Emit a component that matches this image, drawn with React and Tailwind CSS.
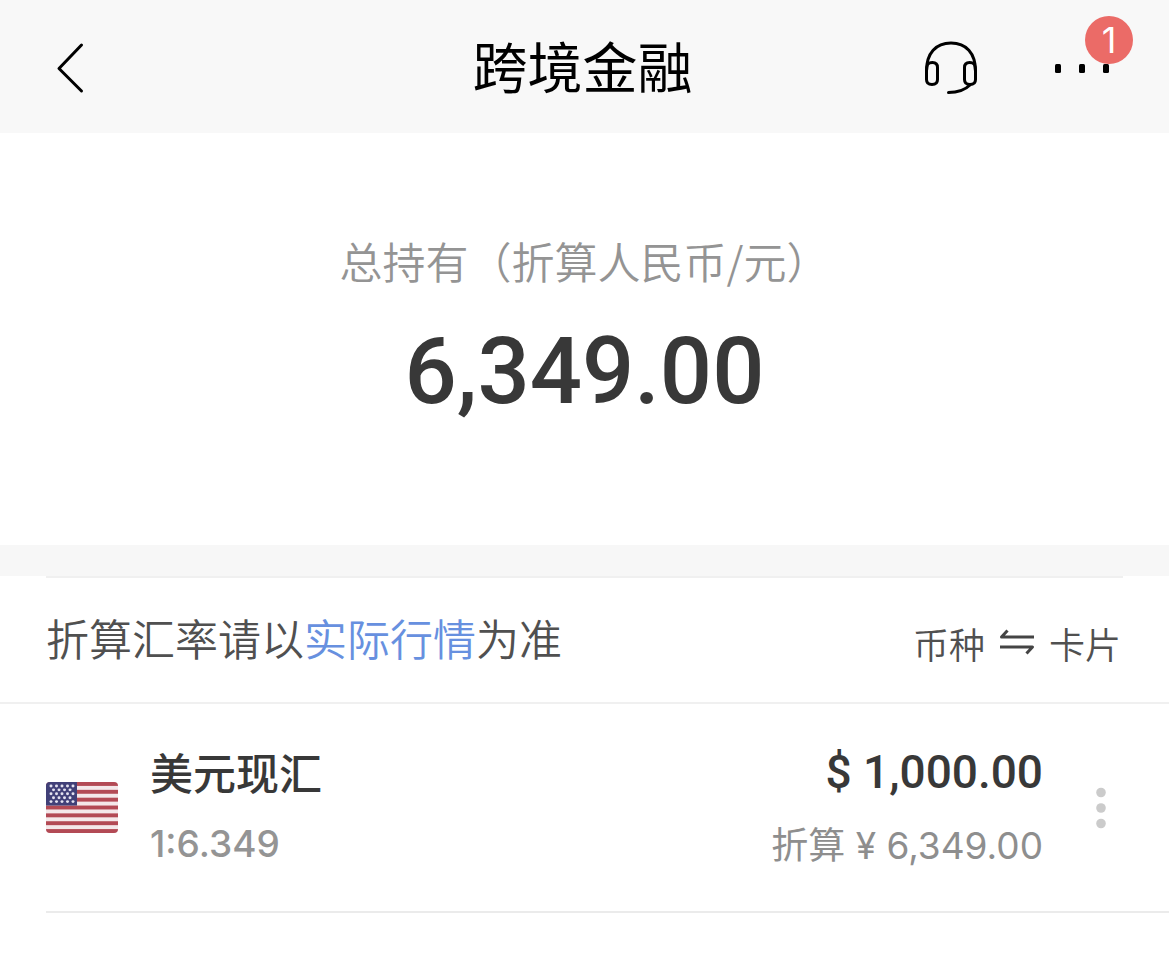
import { Fragment } from "react";

const holdings = [
  { name: "美元现汇", rate: "1:6.349", amount: "$ 1,000.00", converted: "折算 ¥ 6,349.00" }
];

export default function App() {
  return (
    <div className="min-h-screen bg-white font-['Inter','Noto_Sans_CJK_SC',sans-serif] text-[#383838]">
      <Header />
      <main>
        <Summary />
        <RateBar />
        <ul>
          {holdings.map((item) => (
            <HoldingRow key={item.name} item={item} />
          ))}
        </ul>
      </main>
    </div>
  );
}

function Header() {
  return (
    <header className="grid h-[133px] grid-cols-[1fr_auto_1fr] items-center bg-[#f8f8f8] pr-[58px] pl-[54px] text-black">
      <button type="button" aria-label="返回" className="justify-self-start">
        <svg className="h-14 w-8" viewBox="0 0 32 56" fill="none" stroke="currentColor" strokeWidth="3" strokeLinecap="round" strokeLinejoin="round">
          <path d="M27.500 6 5 29.500 27.500 52" />
        </svg>
      </button>

      <h1 className="pt-1 text-[55px] leading-none">跨境金融</h1>

      <div className="flex items-center gap-[74px] justify-self-end">
        <button type="button" aria-label="客服">
          <HeadsetIcon />
        </button>
        <button type="button" aria-label="更多" className="relative py-5">
          <svg className="h-4 w-[58px]" viewBox="0 0 58 16" fill="currentColor">
            <rect x="2" y="5" width="6" height="9" rx="1.500" />
            <rect x="26" y="5" width="6" height="9" rx="1.500" />
            <rect x="50" y="5" width="6" height="9" rx="1.500" />
          </svg>
          <span className="absolute -top-[23px] -right-[22px] grid size-12 place-items-center rounded-full bg-[#eb6b67] text-4xl leading-none text-white">
            1
          </span>
        </button>
      </div>
    </header>
  );
}

function Summary() {
  return (
    <section className="flex h-[412px] flex-col items-center pt-[95px]">
      <h2 className="font-['Noto_Sans_CJK_SC',sans-serif] text-[43px] leading-[64px] font-[350] text-[#949494]">
        总持有（折算人民币/元）
      </h2>
      <p className="mt-6 font-['Roboto',sans-serif] text-[92px] leading-[112px] font-medium">6,349.00</p>
    </section>
  );
}

function RateBar() {
  return (
    <section className="border-b-2 border-[#f0f0f0]">
      <div className="h-[31px] bg-[#f7f7f7]" />
      <div className="mx-[46px] flex h-[126px] items-center justify-between border-t-2 border-[#f0f0f0] font-[350] text-[#505050]">
        <p className="text-[43px] leading-[64px]">
          折算汇率请以
          <a href="#rates" className="text-[#6790df]">实际行情</a>
          为准
        </p>
        <button type="button" className="flex items-center gap-3 pt-3 pr-0.5 text-4xl leading-[52px]">
          <span>币种</span>
          <SwapIcon />
          <span>卡片</span>
        </button>
      </div>
    </section>
  );
}

function HoldingRow({ item }) {
  return (
    <li className="ml-[46px] flex h-[209px] items-center border-b-2 border-[#ebebeb] pr-[60px]">
      <UsFlag />
      <div className="ml-8 flex-1">
        <p className="text-[43px] leading-[64px] font-medium">{item.name}</p>
        <p className="mt-2 text-[37px] leading-[60px] font-medium text-[#949494]">{item.rate}</p>
      </div>
      <div className="text-right">
        <p className="font-['Roboto',sans-serif] text-[46px] leading-[64px] font-medium">{item.amount}</p>
        <p className="mt-2 pt-1 text-[37px] leading-[60px] text-[#8e8e8e]">{item.converted}</p>
      </div>
      <button type="button" aria-label="更多操作" className="ml-[50px]">
        <svg className="h-[42px] w-4" viewBox="0 0 16 42" fill="#cbcbcb">
          <circle cx="8" cy="5.500" r="4.800" />
          <circle cx="8" cy="21" r="4.800" />
          <circle cx="8" cy="36.500" r="4.800" />
        </svg>
      </button>
    </li>
  );
}

function HeadsetIcon() {
  return (
    <svg className="size-14" viewBox="0 0 56 56" fill="none" stroke="currentColor" strokeWidth="3" strokeLinecap="round">
      <path d="M3.500 32C3.500 14 13 4 28 4s24.500 10 24.500 28" />
      <path d="M3.500 32c0-6 1-8.500 6-8.500 3.500 0 5 1.500 5 5v12c0 3-2 5-5.500 5s-5.500-2-5.500-5z" />
      <path d="M52.500 32c0-6-1-8.500-6-8.500-3.500 0-5 1.500-5 5v12c0 3 2 5 5.500 5s5.500-2 5.500-5z" />
      <path d="M47 46c-5 5-12 7.500-21.500 7.500" />
    </svg>
  );
}

function SwapIcon() {
  return (
    <svg className="h-9 w-10" viewBox="0 0 40 36" fill="none" stroke="#444" strokeWidth="3" strokeLinejoin="round">
      <path d="M37 9H4.500l6-6.500" />
      <path d="M3 19h32.500l-6 6.500" />
    </svg>
  );
}

function UsFlag() {
  return (
    <svg className="h-[51px] w-[72px] rounded" viewBox="0 0 72 52" preserveAspectRatio="none" role="img" aria-label="美国国旗">
      <rect width="72" height="52" fill="#f4e8ea" />
      {[0, 8, 16, 24, 32, 40, 48].map((y) => (
        <rect key={y} y={y} width="72" height="4" fill="#b34a55" />
      ))}
      <rect width="31" height="24" fill="#414078" />
      {[4, 8, 12, 16, 20].map((y, row) => (
        <Fragment key={y}>
          {(row % 2 ? [7.500, 13, 18.500, 24] : [5, 10.500, 16, 21.500, 27]).map((x) => (
            <circle key={x} cx={x} cy={y} r="1.500" fill="#e4e2f0" />
          ))}
        </Fragment>
      ))}
    </svg>
  );
}
